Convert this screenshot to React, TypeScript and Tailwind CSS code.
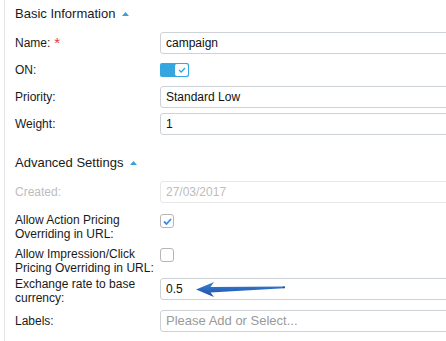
import React from "react";

const font = { fontFamily: '"Liberation Sans", Arial, sans-serif' };

function Caret() {
  return (
    <svg width="7" height="4" viewBox="0 0 7 4" className="ml-[7px]">
      <path d="M0 4 L3.5 0 L7 4 Z" fill="#3a9fd8" />
    </svg>
  );
}

function Heading({ children }: { children: React.ReactNode }) {
  return (
    <div className="flex h-[20px] items-center text-[13px] text-[#1a1a1a]">
      <span>{children}</span>
      <Caret />
    </div>
  );
}

function TextInput({
  value,
  placeholder,
  disabled,
  children,
}: {
  value?: string;
  placeholder?: string;
  disabled?: boolean;
  children?: React.ReactNode;
}) {
  return (
    <div
      className={
        "relative flex h-[22px] w-[320px] items-center rounded-[3px] border bg-white pl-[5px] " +
        (disabled ? "border-[#e8e8e8]" : "border-[#cdd2d6]")
      }
    >
      {value !== undefined ? (
        <span className={"text-[12px] " + (disabled ? "text-[#bdbdbd]" : "text-[#111]")}>{value}</span>
      ) : (
        <span className="text-[13px] text-[#9a9a9a]">{placeholder}</span>
      )}
      {children}
    </div>
  );
}

function Check({ checked }: { checked: boolean }) {
  return (
    <div className="flex h-[14px] w-[14px] items-center justify-center rounded-[3px] border border-[#b5b5b5] bg-white">
      {checked && (
        <svg width="9" height="7" viewBox="0 0 9 7">
          <path d="M1 3.5 L3.5 6 L8 1" stroke="#3a8fe0" strokeWidth="1.8" fill="none" />
        </svg>
      )}
    </div>
  );
}

function Toggle() {
  return (
    <div className="flex h-[14px] w-[29px] items-center rounded-[2px] bg-[#35a6df] pr-[1px]">
      <div className="ml-auto flex h-[12px] w-[13px] items-center justify-center rounded-[2px] bg-white">
        <svg width="8" height="6" viewBox="0 0 8 6">
          <path d="M1 3 L3.2 5 L7 1" stroke="#35a6df" strokeWidth="1.3" fill="none" />
        </svg>
      </div>
    </div>
  );
}

function Row({
  label,
  children,
  className = "",
  align = "center",
}: {
  label: React.ReactNode;
  children: React.ReactNode;
  className?: string;
  align?: "center" | "start";
}) {
  return (
    <div className={"flex " + (align === "center" ? "items-center " : "items-start ") + className}>
      <div className="w-[145px] shrink-0 text-[12px] leading-[14px] text-[#1a1a1a]">{label}</div>
      <div className={align === "start" ? "pt-[1px]" : ""}>{children}</div>
    </div>
  );
}

function Arrow() {
  return (
    <svg
      width="95"
      height="20"
      viewBox="0 0 95 20"
      className="absolute left-[33px] top-[0px]"
    >
      <defs>
        <linearGradient id="ag" x1="0" y1="0" x2="0" y2="1">
          <stop offset="0" stopColor="#3c83d6" />
          <stop offset="1" stopColor="#1a4ea6" />
        </linearGradient>
      </defs>
      <path d="M2 10.5 L20 3 L16.5 8 L90 7.4 L90 9.2 L16.5 13.5 L20 18 Z" fill="url(#ag)" />
      <circle cx="90" cy="8.3" r="1.1" fill="#1a4ea6" />
    </svg>
  );
}

export default function App() {
  return (
    <div className="h-[341px] w-[446px] overflow-hidden bg-white" style={font}>
      <div className="ml-[4px] flex h-full flex-col border-l border-[#e6e6e6] pl-[10px] pt-[4px]">
        <Heading>Basic Information</Heading>
        <Row
          className="mt-[8px]"
          label={
            <span className="flex items-center">
              Name:
              <span className="ml-[4px] text-[15px] leading-[14px] text-[#e53935]">*</span>
            </span>
          }
        >
          <TextInput value="campaign" />
        </Row>
        <Row className="mt-[5px] h-[22px]" label="ON:">
          <Toggle />
        </Row>
        <Row className="mt-[5px]" label="Priority:">
          <TextInput value="Standard Low" />
        </Row>
        <Row className="mt-[5px]" label="Weight:">
          <TextInput value="1" />
        </Row>

        <div className="mt-[18px]">
          <Heading>Advanced Settings</Heading>
        </div>
        <Row className="mt-[8px]" label={<span className="text-[#bdbdbd]">Created:</span>}>
          <TextInput value="27/03/2017" disabled />
        </Row>
        <Row className="mt-[10px]" align="start" label={<>Allow Action Pricing<br />Overriding in URL:</>}>
          <Check checked />
        </Row>
        <Row className="mt-[6px]" align="start" label={<>Allow Impression/Click<br />Pricing Overriding in URL:</>}>
          <Check checked={false} />
        </Row>
        <Row className="mt-[2px]" align="start" label={<>Exchange rate to base<br />currency:</>}>
          <TextInput value="0.5">
            <Arrow />
          </TextInput>
        </Row>
        <Row className="mt-[5px]" label="Labels:">
          <TextInput placeholder="Please Add or Select..." />
        </Row>
      </div>
    </div>
  );
}
